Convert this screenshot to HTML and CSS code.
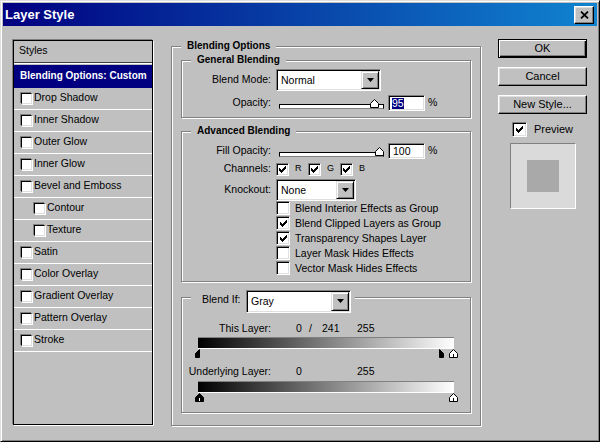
FILE: index.html
```html
<!DOCTYPE html>
<html>
<head>
<meta charset="utf-8">
<title>Layer Style</title>
<link rel="stylesheet" href="styles.css">
</head>
<body>
<svg class="defs" width="0" height="0">
  <symbol id="chk" viewBox="0 0 7 7"><path d="M6 0h1v1h-1z M5 1h2v1h-2z M0 2h1v1h-1z M4 2h3v1h-3z M0 3h2v1h-2z M3 3h3v1h-3z M0 4h5v1h-5z M1 5h3v1h-3z M2 6h1v1h-1z" fill="#000"/></symbol>
  <symbol id="arrow" viewBox="0 0 7 4"><polygon points="0,0 7,0 3.5,4" fill="#000"/></symbol>
  <symbol id="thumbW" viewBox="0 0 9 9"><polygon points="0.5,8.5 0.5,4.5 4.5,0.5 8.5,4.5 8.5,8.5" fill="#fff" stroke="#000"/><line x1="4.5" y1="5" x2="4.5" y2="8" stroke="#000"/></symbol>
  <symbol id="thumbB" viewBox="0 0 9 9"><polygon points="0.5,8.5 0.5,4.5 4.5,0.5 8.5,4.5 8.5,8.5" fill="#000" stroke="#000"/><line x1="4.5" y1="5" x2="4.5" y2="8" stroke="#fff"/></symbol>
  <symbol id="thumbBL" viewBox="0 0 5 9"><polygon points="0.5,8.5 0.5,4.5 4.5,0.5 4.5,8.5" fill="#000" stroke="#000"/></symbol>
  <symbol id="thumbBR" viewBox="0 0 5 9"><polygon points="0.5,8.5 0.5,0.5 4.5,4.5 4.5,8.5" fill="#000" stroke="#000"/></symbol>
  <symbol id="sthumb" viewBox="0 0 9 9"><polygon points="0.5,8.5 0.5,4.5 4.5,0.5 8.5,4.5 8.5,8.5" fill="#fff" stroke="#000"/></symbol>
</svg>
<div class="window">
  <div class="titlebar">
    <span class="title">Layer Style</span>
    <span class="close"><svg width="9" height="8" viewBox="0 0 9 8"><path d="M1 0.6 L8 7.4 M8 0.6 L1 7.4" stroke="#000" stroke-width="1.8"/></svg></span>
  </div>
  <div class="content">
    <div class="styles">
      <div class="styles-head"><span class="t">Styles</span></div>
      <div class="sel"><span class="t">Blending Options: Custom</span></div>
      <div class="item"><span class="scb"></span><span class="t">Drop Shadow</span></div>
      <div class="item"><span class="scb"></span><span class="t">Inner Shadow</span></div>
      <div class="item"><span class="scb"></span><span class="t">Outer Glow</span></div>
      <div class="item"><span class="scb"></span><span class="t">Inner Glow</span></div>
      <div class="item"><span class="scb"></span><span class="t">Bevel and Emboss</span></div>
      <div class="item sub"><span class="scb"></span><span class="t">Contour</span></div>
      <div class="item sub"><span class="scb"></span><span class="t">Texture</span></div>
      <div class="item"><span class="scb"></span><span class="t">Satin</span></div>
      <div class="item"><span class="scb"></span><span class="t">Color Overlay</span></div>
      <div class="item"><span class="scb"></span><span class="t">Gradient Overlay</span></div>
      <div class="item"><span class="scb"></span><span class="t">Pattern Overlay</span></div>
      <div class="item"><span class="scb"></span><span class="t">Stroke</span></div>
    </div>

    <div class="main etched">
      <div class="gtitle">Blending Options</div>

      <div class="group etched general">
        <div class="gtitle">General Blending</div>
        <div class="row r-blend">
          <span class="lbl">Blend Mode:</span>
          <div class="dd dd-wide"><span class="dd-text">Normal</span><span class="dd-btn"><svg width="7" height="4"><use href="#arrow"/></svg></span></div>
        </div>
        <div class="row r-slide">
          <span class="lbl">Opacity:</span>
          <div class="slider"><div class="track"></div><svg class="sthumb" width="9" height="9" style="left:91px"><use href="#sthumb"/></svg></div>
          <div class="num"><span class="hl">95</span></div>
          <span class="pct">%</span>
        </div>
      </div>

      <div class="group etched adv">
        <div class="gtitle">Advanced Blending</div>
        <div class="row r-fill">
          <span class="lbl">Fill Opacity:</span>
          <div class="slider"><div class="track"></div><svg class="sthumb" width="9" height="9" style="left:96px"><use href="#sthumb"/></svg></div>
          <div class="num">100</div>
          <span class="pct">%</span>
        </div>
        <div class="row r-chan">
          <span class="lbl">Channels:</span>
          <div class="chan"><span class="cb cb13"><svg width="7" height="7"><use href="#chk"/></svg></span><span class="letter">R</span></div>
          <div class="chan"><span class="cb cb13"><svg width="7" height="7"><use href="#chk"/></svg></span><span class="letter">G</span></div>
          <div class="chan"><span class="cb cb13"><svg width="7" height="7"><use href="#chk"/></svg></span><span class="letter">B</span></div>
        </div>
        <div class="row r-knock">
          <span class="lbl">Knockout:</span>
          <div class="dd dd-knock"><span class="dd-text">None</span><span class="dd-btn"><svg width="7" height="4"><use href="#arrow"/></svg></span></div>
        </div>
        <div class="cblist">
          <div class="cbrow"><span class="cb cb14"></span><span class="cbtext">Blend Interior Effects as Group</span></div>
          <div class="cbrow"><span class="cb cb14"><svg width="7" height="7"><use href="#chk"/></svg></span><span class="cbtext">Blend Clipped Layers as Group</span></div>
          <div class="cbrow"><span class="cb cb14"><svg width="7" height="7"><use href="#chk"/></svg></span><span class="cbtext">Transparency Shapes Layer</span></div>
          <div class="cbrow"><span class="cb cb14"></span><span class="cbtext">Layer Mask Hides Effects</span></div>
          <div class="cbrow"><span class="cb cb14"></span><span class="cbtext">Vector Mask Hides Effects</span></div>
        </div>
      </div>

      <div class="group etched blendif">
        <div class="bihead">
          <span class="bilbl">Blend If:</span>
          <div class="dd dd-wide dd-bi"><span class="dd-text">Gray</span><span class="dd-btn"><svg width="7" height="4"><use href="#arrow"/></svg></span></div>
        </div>
        <div class="row lrow lrow1">
          <span class="lbl">This Layer:</span>
          <span class="v0">0</span><span class="vs">/</span><span class="v1">241</span><span class="v2">255</span>
        </div>
        <div class="gbar"></div>
        <div class="trow">
          <svg class="th" width="5" height="9" style="left:0px"><use href="#thumbBL"/></svg>
          <svg class="th" width="5" height="9" style="left:244px"><use href="#thumbBR"/></svg>
          <svg class="th" width="9" height="9" style="left:254px"><use href="#thumbW"/></svg>
        </div>
        <div class="row lrow lrow2">
          <span class="lbl">Underlying Layer:</span>
          <span class="v0">0</span><span class="vs"></span><span class="v1"></span><span class="v2">255</span>
        </div>
        <div class="gbar gbar2"></div>
        <div class="trow">
          <svg class="th" width="9" height="9" style="left:0px"><use href="#thumbB"/></svg>
          <svg class="th" width="9" height="9" style="left:254px"><use href="#thumbW"/></svg>
        </div>
      </div>
    </div>

    <div class="side">
      <div class="btn default">OK</div>
      <div class="btn">Cancel</div>
      <div class="btn">New Style...</div>
      <div class="prev-row"><span class="cb cb15"><svg width="7" height="7"><use href="#chk"/></svg></span><span class="t">Preview</span></div>
      <div class="prev-box"><div class="prev-sq"></div></div>
    </div>
  </div>
</div>
</body>
</html>
```

FILE: styles.css
```css
html, body {
  margin: 0;
  padding: 0;
}
body {
  background: #c0c0c0;
  font-family: "Liberation Sans", Arial, sans-serif;
  font-size: 10.5px;
  color: #000;
}
.defs {
  position: absolute;
  width: 0;
  height: 0;
  overflow: hidden;
}
.t {
  padding-bottom: 3px;
}

.window {
  width: 600px;
  height: 442px;
  box-sizing: border-box;
  border: 1px solid;
  border-color: #dfdfdf #000 #000 #dfdfdf;
  box-shadow: inset 1px 1px #fff, inset -1px -1px #808080;
  padding: 2px;
  background: #c0c0c0;
}

.titlebar {
  height: 23px;
  display: flex;
  align-items: center;
  justify-content: space-between;
  padding: 0 3px 0 2px;
  background: linear-gradient(90deg, #000080, #1084d0);
}
.title {
  color: #fff;
  font-weight: bold;
  font-size: 13px;
}
.close {
  width: 20px;
  height: 18px;
  box-sizing: border-box;
  background: #c0c0c0;
  border: 1px solid;
  border-color: #fff #000 #000 #fff;
  box-shadow: inset -1px -1px #808080, inset 1px 1px #dfdfdf;
  display: flex;
  align-items: center;
  justify-content: center;
}

.content {
  display: flex;
  align-items: flex-start;
  padding: 13px 0 0 10px;
}

/* ---- styles list ---- */
.styles {
  width: 140px;
  height: 385px;
  box-sizing: border-box;
  margin-top: 1px;
  border: 1px solid #000;
  box-shadow: -1px -1px #808080, 1px 1px #fff;
  flex: none;
}
.styles-head {
  height: 21px;
  display: flex;
  align-items: center;
  padding-left: 5px;
  border-bottom: 1px solid #404040;
  box-shadow: 0 1px #fff;
  margin-bottom: 2px;
}
.sel {
  height: 23px;
  display: flex;
  align-items: center;
  padding-left: 6px;
  background: #000080;
  color: #fff;
  font-weight: bold;
  font-size: 10px;
}
.item {
  height: 21px;
  display: flex;
  align-items: center;
  padding-left: 7px;
  border-bottom: 1px solid #fff;
}
.item.sub {
  padding-left: 20px;
}
.scb {
  width: 11px;
  height: 11px;
  box-sizing: border-box;
  background: #fff;
  border: 1px solid;
  border-color: #000 #dfdfdf #dfdfdf #000;
  box-shadow: -1px -1px #808080, 1px 1px #fff;
  margin-right: 2px;
  flex: none;
}

/* ---- groups ---- */
.etched {
  box-sizing: border-box;
  border: 1px solid #808080;
  box-shadow: inset 1px 1px #fff, 1px 1px #fff;
}
.main {
  width: 310px;
  height: 380px;
  margin: 7px 0 0 18px;
  flex: none;
}
.gtitle {
  width: fit-content;
  height: 14px;
  line-height: 13px;
  margin: -8px 0 0 9px;
  padding: 0 6px;
  background: #c0c0c0;
  font-weight: bold;
  font-size: 10px;
}
.group {
  width: 290px;
  margin-left: 9px;
}
.general {
  margin-top: 7px;
  padding-bottom: 6px;
}
.adv {
  margin-top: 13px;
  padding-bottom: 5px;
}
.blendif {
  margin-top: 15px;
  padding-bottom: 10px;
}

.row {
  display: flex;
  align-items: center;
}
.lbl {
  width: 89px;
  margin-right: 5px;
  padding-bottom: 2px;
  text-align: right;
  white-space: nowrap;
  flex: none;
}
.r-blend { margin-top: 2px; }
.r-slide { margin-top: 4px; height: 16px; }
.r-fill { margin-top: 5px; height: 16px; }
.r-chan { margin-top: 3px; height: 14px; }
.r-knock { margin-top: 3px; }

/* dropdown */
.dd {
  display: flex;
  height: 22px;
  box-sizing: border-box;
  border: 1px solid;
  border-color: #808080 #fff #fff #808080;
  box-shadow: inset 1px 1px #000, inset -1px -1px #dfdfdf;
  padding: 1px;
  background: #fff;
  flex: none;
}
.dd-wide { width: 105px; }
.dd-knock { width: 80px; }
.dd-bi { height: 23px; }
.dd-text {
  flex: 1;
  display: flex;
  align-items: center;
  padding: 0 0 1px 3px;
}
.dd-btn {
  width: 18px;
  box-sizing: border-box;
  background: #c0c0c0;
  border: 1px solid;
  border-color: #dfdfdf #000 #000 #dfdfdf;
  box-shadow: inset 1px 1px #fff, inset -1px -1px #808080;
  display: flex;
  align-items: center;
  justify-content: center;
}

/* slider */
.slider {
  position: relative;
  width: 105px;
  height: 16px;
  margin-left: 3px;
  flex: none;
}
.track {
  margin-top: 9px;
  height: 5px;
  box-sizing: border-box;
  border: 1px solid #000;
  border-bottom-color: #808080;
  background: #fff;
}
.sthumb {
  position: absolute;
  top: 4px;
  display: block;
}
.num {
  width: 37px;
  height: 16px;
  box-sizing: border-box;
  border: 1px solid;
  border-color: #808080 #fff #fff #808080;
  box-shadow: inset 1px 1px #000, inset -1px -1px #dfdfdf;
  background: #fff;
  padding-left: 4px;
  display: flex;
  align-items: center;
  margin-left: 4px;
  flex: none;
}
.hl {
  background: #000080;
  color: #fff;
  line-height: 11px;
  margin-left: -1px;
}
.pct { margin-left: 3px; padding-bottom: 2px; }

/* checkboxes */
.cb {
  box-sizing: border-box;
  background: #fff;
  border: 1px solid;
  border-color: #808080 #fff #fff #808080;
  box-shadow: inset 1px 1px #000, inset -1px -1px #dfdfdf;
  display: flex;
  align-items: center;
  justify-content: center;
  flex: none;
}
.cb svg { display: block; }
.cb13 { width: 13px; height: 13px; }
.cb14 { width: 14px; height: 14px; }
.cb15 { width: 15px; height: 15px; }

.chan {
  display: flex;
  align-items: center;
  width: 32px;
}
.letter {
  margin-left: 6px;
  padding-bottom: 2px;
  font-size: 9px;
  white-space: nowrap;
}

.cblist {
  margin-left: 94px;
}
.cbrow {
  display: flex;
  align-items: flex-start;
  height: 15px;
}
.cbrow .cb { margin-right: 5px; }
.cbtext {
  white-space: nowrap;
  line-height: 14px;
}

/* blend if */
.bihead {
  display: flex;
  align-items: center;
  width: fit-content;
  height: 24px;
  margin: -9px 0 0 9px;
  padding: 0 4px 0 11px;
  background: #c0c0c0;
}
.bilbl {
  width: 44px;
  padding-bottom: 4px;
}
.lrow {
  height: 13px;
}
.lrow1 { margin-top: 9px; }
.lrow2 { margin-top: 7px; }
.v0 { margin-left: 20px; width: 13px; padding-bottom: 2px; }
.vs { width: 13px; padding-bottom: 2px; }
.v1 { width: 35px; padding-bottom: 2px; }
.v2 { padding-bottom: 2px; }
.gbar {
  width: 256px;
  height: 11px;
  box-sizing: border-box;
  margin: 2px 0 0 16px;
  border-top: 1px solid #808080;
  background: linear-gradient(90deg, #000, #fff);
  box-shadow: 0 1px #fff;
}
.gbar2 { margin-top: 3px; }
.trow {
  position: relative;
  width: 265px;
  height: 9px;
  margin: 1px 0 0 13px;
}
.th {
  position: absolute;
  top: 0;
  display: block;
}

/* side */
.side {
  width: 89px;
  margin-left: 17px;
  display: flex;
  flex-direction: column;
  align-items: center;
  flex: none;
}
.btn {
  width: 89px;
  height: 19px;
  box-sizing: border-box;
  border: 1px solid;
  border-color: #fff #000 #000 #fff;
  box-shadow: inset -1px -1px #808080, inset 1px 1px #dfdfdf;
  display: flex;
  align-items: center;
  justify-content: center;
  padding-bottom: 1px;
  font-size: 11px;
}
.btn.default {
  border-color: #000;
  box-shadow: inset 1px 1px #fff, inset -1px -1px #000, inset -2px -2px #808080;
}
.btn + .btn { margin-top: 9px; }
.prev-row {
  display: flex;
  align-items: center;
  gap: 7px;
  margin-top: 8px;
  font-size: 11px;
}
.prev-row .t { padding-bottom: 2px; }
.prev-box {
  width: 66px;
  height: 66px;
  box-sizing: border-box;
  margin-top: 6px;
  border: 1px solid;
  border-color: #808080 #fff #fff #808080;
  background: #dadada;
  display: flex;
  align-items: center;
  justify-content: center;
}
.prev-sq {
  width: 32px;
  height: 32px;
  background: #a9a9a9;
}
```
